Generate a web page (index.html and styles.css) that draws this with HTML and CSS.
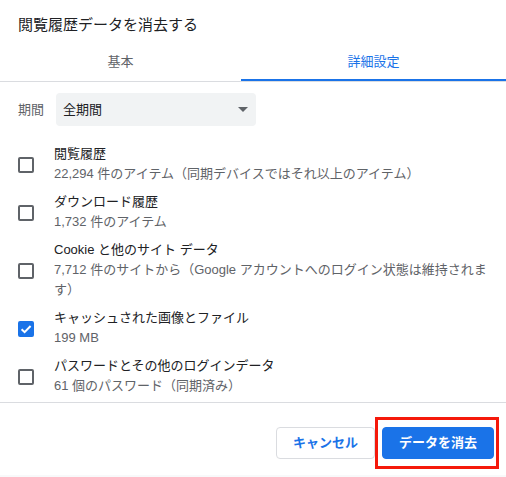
FILE: index.html
```html
<!DOCTYPE html>
<html lang="ja">
<head>
<meta charset="utf-8">
<title>閲覧履歴データを消去する</title>
<link rel="stylesheet" href="styles.css">
</head>
<body>
<div class="dialog">
  <h1 class="title">閲覧履歴データを消去する</h1>
  <div class="tabs">
    <div class="tab basic">基本</div>
    <div class="tab active">詳細設定</div>
  </div>
  <div class="content">
    <div class="range">
      <span class="range-label">期間</span>
      <div class="select">
        <span class="select-value">全期間</span>
        <span class="arrow"></span>
      </div>
    </div>
    <ul class="items">
      <li class="item">
        <span class="cb"></span>
        <div class="texts">
          <div class="t">閲覧履歴</div>
          <div class="s">22,294 件のアイテム（同期デバイスではそれ以上のアイテム）</div>
        </div>
      </li>
      <li class="item">
        <span class="cb"></span>
        <div class="texts">
          <div class="t">ダウンロード履歴</div>
          <div class="s">1,732 件のアイテム</div>
        </div>
      </li>
      <li class="item">
        <span class="cb"></span>
        <div class="texts">
          <div class="t">Cookie と他のサイト データ</div>
          <div class="s">7,712 件のサイトから（Google アカウントへのログイン状態は維持されま<br>す）</div>
        </div>
      </li>
      <li class="item">
        <span class="cb checked"><svg viewBox="0 0 16 16" width="16" height="16"><path d="M3.6 8.3 L6.6 11.2 L12.6 5" fill="none" stroke="#fff" stroke-width="2"/></svg></span>
        <div class="texts">
          <div class="t">キャッシュされた画像とファイル</div>
          <div class="s">199 MB</div>
        </div>
      </li>
      <li class="item">
        <span class="cb"></span>
        <div class="texts">
          <div class="t">パスワードとその他のログインデータ</div>
          <div class="s">61 個のパスワード（同期済み）</div>
        </div>
      </li>
    </ul>
  </div>
  <div class="footer">
    <button class="btn cancel">キャンセル</button>
    <span class="primary-wrap">
      <button class="btn primary">データを消去</button>
      <span class="highlight"></span>
    </span>
  </div>
  <div class="band"></div>
</div>
</body>
</html>
```
FILE: styles.css
```css
* { box-sizing: border-box; }
html, body { margin: 0; padding: 0; background: #fff; }
body {
  font-family: "Liberation Sans", "Noto Sans CJK JP", sans-serif;
  color: #202124;
  font-size: 13px;
}
.dialog { width: 506px; height: 477px; display: flex; flex-direction: column; overflow: hidden; }
.title {
  margin: 0;
  padding: 14px 18px 5px;
  font-size: 15px;
  font-weight: normal;
  line-height: 21px;
  color: #202124;
}
.tabs {
  display: flex;
  border-bottom: 1px solid #dadce0;
}
.tab {
  flex: 1;
  height: 41px;
  display: flex;
  align-items: center;
  justify-content: center;
  border-bottom: 2px solid transparent;
  padding-top: 2px;
  color: #5f6368;
  font-size: 13px;
}
.tab.basic { flex: none; width: 241px; }
.tab.active { color: #1a73e8; border-bottom-color: #1a73e8; }
.content { flex: 1; padding: 11px 0 2px; }
.range { display: flex; align-items: center; padding-left: 18px; }
.range-label { color: #5f6368; width: 38px; line-height: 20px; }
.select {
  width: 200px;
  height: 33px;
  background: #f1f3f4;
  border-radius: 4px;
  display: flex;
  align-items: center;
  justify-content: space-between;
  padding: 0 8px 0 7px;
}
.select-value { color: #202124; line-height: 20px; }
.arrow {
  width: 0; height: 0;
  border-left: 5px solid transparent;
  border-right: 5px solid transparent;
  border-top: 5px solid #5f6368;
}
.items { list-style: none; margin: 14px 0 0; padding: 0; }
.item {
  display: flex;
  align-items: center;
  padding: 4px 0 4px 18px;
}
.cb {
  width: 16px; height: 16px;
  border: 2px solid #5f6368;
  border-radius: 2px;
  flex: none;
  margin-right: 20px;
  margin-top: 1px;
  position: relative;
}
.cb.checked { background: #1a73e8; border-color: #1a73e8; }
.cb.checked svg { position: absolute; left: -2px; top: -2px; }
.texts { line-height: 20px; white-space: nowrap; }
.t { color: #202124; }
.s { color: #5f6368; }
.footer {
  border-top: 1px solid #dadce0;
  padding: 24px 12px 16px;
  display: flex;
  justify-content: flex-end;
  align-items: center;
  gap: 7px;
}
.btn {
  height: 32px;
  padding: 0 16px;
  border-radius: 4px;
  font-family: "Liberation Sans", "Noto Sans CJK JP", sans-serif;
  font-size: 13px;
  font-weight: 700;
  border: 1px solid #dadce0;
  background: #fff;
  color: #1a73e8;
  line-height: 20px;
}
.btn.primary { background: #1a73e8; border-color: #1a73e8; color: #fff; }
.primary-wrap { position: relative; display: inline-flex; }
.highlight {
  position: absolute;
  left: -7px; right: -5px; top: -10px; bottom: -10px;
  border: 3px solid #f5190b;
  pointer-events: none;
}
.band { height: 2px; background: #f8f9fa; }
```
